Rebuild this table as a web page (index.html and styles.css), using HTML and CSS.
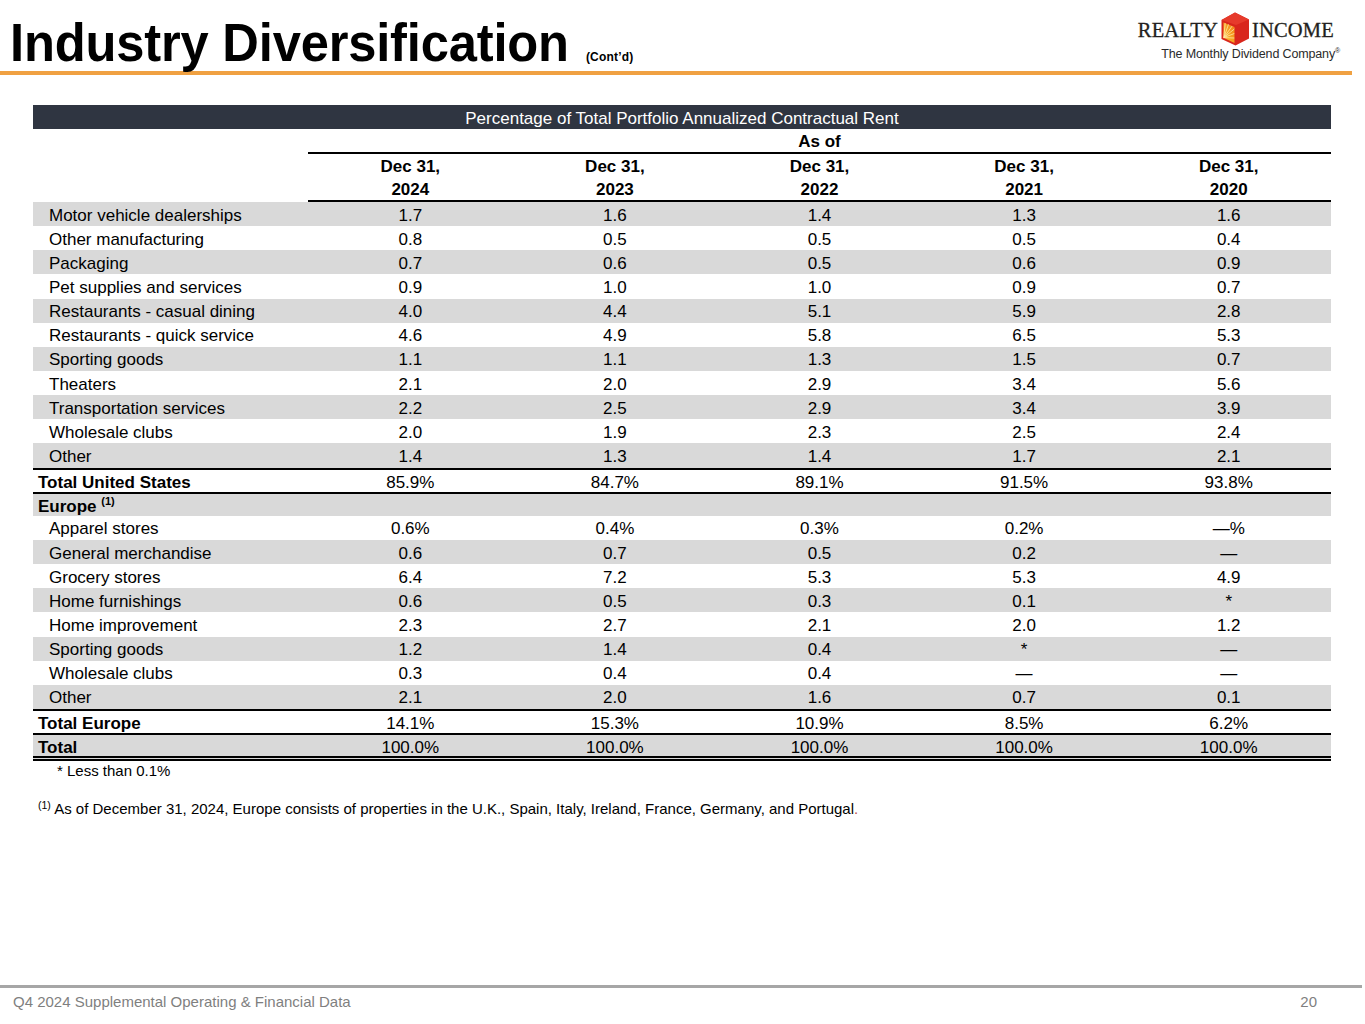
FILE: index.html
```html
<!DOCTYPE html>
<html lang="en">
<head>
<meta charset="utf-8">
<title>Industry Diversification</title>
<link rel="stylesheet" href="styles.css">
</head>
<body>
<div class="page">
  <header class="top">
    <h1 class="title"><span class="title-main">Industry Diversification</span><span class="contd">(Cont’d)</span></h1>
    <div class="logo">
      <div class="logo-row">
        <span class="logo-word">REALTY</span>
        <svg class="house" viewBox="0 0 30 34" width="30" height="34" aria-hidden="true">
          <defs>
            <linearGradient id="sun" x1="0" y1="1" x2="1" y2="0">
              <stop offset="0" stop-color="#fbc02a"/>
              <stop offset="0.6" stop-color="#f59a1f"/>
              <stop offset="1" stop-color="#ef7d1a"/>
            </linearGradient>
          </defs>
          <path d="M15 0.5 L29 7.5 L29 26.5 L15.5 33.5 L1.5 27 L1.5 8 Z" fill="#d9261c"/>
          <path d="M15 0.5 L29 7.5 L16 13 L1.5 8 Z" fill="#e63a2b"/>
          <path d="M3.5 10.5 L14.5 15 L14.5 31 L3.5 25.8 Z" fill="url(#sun)"/>
          <g stroke="#fee9a8" stroke-width="0.8">
            <line x1="3.8" y1="25.6" x2="14.3" y2="17"/>
            <line x1="3.8" y1="25.6" x2="14.3" y2="21.5"/>
            <line x1="3.8" y1="25.6" x2="14.3" y2="26"/>
            <line x1="3.8" y1="25.6" x2="12" y2="14.2"/>
            <line x1="3.8" y1="25.6" x2="8.5" y2="12.4"/>
            <line x1="3.8" y1="25.6" x2="5.2" y2="11.2"/>
          </g>
        </svg>
        <span class="logo-word">INCOME</span>
      </div>
      <div class="tagline">The Monthly Dividend Company<sup>®</sup></div>
    </div>
  </header>

  <main class="content">
    <div class="table">
      <div class="banner">Percentage of Total Portfolio Annualized Contractual Rent</div>
      <div class="row head asof"><div class="lbl"></div><div class="span5">As of</div></div>
      <div class="row head dec"><div class="lbl"></div><div>Dec 31,</div><div>Dec 31,</div><div>Dec 31,</div><div>Dec 31,</div><div>Dec 31,</div></div>
      <div class="row head year"><div class="lbl"></div><div class="c">2024</div><div class="c">2023</div><div class="c">2022</div><div class="c">2021</div><div class="c">2020</div></div>

      <div class="row band"><div class="lbl sub">Motor vehicle dealerships</div><div>1.7</div><div>1.6</div><div>1.4</div><div>1.3</div><div>1.6</div></div>
      <div class="row"><div class="lbl sub">Other manufacturing</div><div>0.8</div><div>0.5</div><div>0.5</div><div>0.5</div><div>0.4</div></div>
      <div class="row band"><div class="lbl sub">Packaging</div><div>0.7</div><div>0.6</div><div>0.5</div><div>0.6</div><div>0.9</div></div>
      <div class="row"><div class="lbl sub">Pet supplies and services</div><div>0.9</div><div>1.0</div><div>1.0</div><div>0.9</div><div>0.7</div></div>
      <div class="row band"><div class="lbl sub">Restaurants - casual dining</div><div>4.0</div><div>4.4</div><div>5.1</div><div>5.9</div><div>2.8</div></div>
      <div class="row"><div class="lbl sub">Restaurants - quick service</div><div>4.6</div><div>4.9</div><div>5.8</div><div>6.5</div><div>5.3</div></div>
      <div class="row band"><div class="lbl sub">Sporting goods</div><div>1.1</div><div>1.1</div><div>1.3</div><div>1.5</div><div>0.7</div></div>
      <div class="row"><div class="lbl sub">Theaters</div><div>2.1</div><div>2.0</div><div>2.9</div><div>3.4</div><div>5.6</div></div>
      <div class="row band"><div class="lbl sub">Transportation services</div><div>2.2</div><div>2.5</div><div>2.9</div><div>3.4</div><div>3.9</div></div>
      <div class="row"><div class="lbl sub">Wholesale clubs</div><div>2.0</div><div>1.9</div><div>2.3</div><div>2.5</div><div>2.4</div></div>
      <div class="row band"><div class="lbl sub">Other</div><div>1.4</div><div>1.3</div><div>1.4</div><div>1.7</div><div>2.1</div></div>
      <div class="row total"><div class="lbl">Total United States</div><div>85.9%</div><div>84.7%</div><div>89.1%</div><div>91.5%</div><div>93.8%</div></div>
      <div class="row band ruled"><div class="lbl group">Europe <sup>(1)</sup></div><div></div><div></div><div></div><div></div><div></div></div>
      <div class="row"><div class="lbl sub">Apparel stores</div><div>0.6%</div><div>0.4%</div><div>0.3%</div><div>0.2%</div><div>—%</div></div>
      <div class="row band"><div class="lbl sub">General merchandise</div><div>0.6</div><div>0.7</div><div>0.5</div><div>0.2</div><div>—</div></div>
      <div class="row"><div class="lbl sub">Grocery stores</div><div>6.4</div><div>7.2</div><div>5.3</div><div>5.3</div><div>4.9</div></div>
      <div class="row band"><div class="lbl sub">Home furnishings</div><div>0.6</div><div>0.5</div><div>0.3</div><div>0.1</div><div>*</div></div>
      <div class="row"><div class="lbl sub">Home improvement</div><div>2.3</div><div>2.7</div><div>2.1</div><div>2.0</div><div>1.2</div></div>
      <div class="row band"><div class="lbl sub">Sporting goods</div><div>1.2</div><div>1.4</div><div>0.4</div><div>*</div><div>—</div></div>
      <div class="row"><div class="lbl sub">Wholesale clubs</div><div>0.3</div><div>0.4</div><div>0.4</div><div>—</div><div>—</div></div>
      <div class="row band"><div class="lbl sub">Other</div><div>2.1</div><div>2.0</div><div>1.6</div><div>0.7</div><div>0.1</div></div>
      <div class="row total"><div class="lbl">Total Europe</div><div>14.1%</div><div>15.3%</div><div>10.9%</div><div>8.5%</div><div>6.2%</div></div>
      <div class="row band total grand"><div class="lbl">Total</div><div>100.0%</div><div>100.0%</div><div>100.0%</div><div>100.0%</div><div>100.0%</div></div>
    </div>
    <p class="note">* Less than 0.1%</p>
    <p class="footnote"><sup>(1)</sup> As of December 31, 2024, Europe consists of properties in the U.K., Spain, Italy, Ireland, France, Germany, and Portugal<span class="red">.</span></p>
  </main>

  <footer class="foot">
    <span>Q4 2024 Supplemental Operating &amp; Financial Data</span>
    <span>20</span>
  </footer>
</div>
</body>
</html>
```

FILE: styles.css
```css
* { box-sizing: border-box; }
html, body { margin: 0; padding: 0; background: #fff; }
body { font-family: "Liberation Sans", Arial, sans-serif; color: #000; }

.page {
  width: 1365px;
  height: 1024px;
  display: flex;
  flex-direction: column;
}

/* ---------- header ---------- */
.top {
  height: 75px;
  margin-right: 13px;
  border-bottom: 4px solid #f0a142;
  display: flex;
  justify-content: space-between;
  align-items: flex-start;
}
.title {
  margin: 0;
  padding: 15.5px 0 0 10px;
  display: flex;
  align-items: baseline;
  font-family: "Liberation Sans", Arial, sans-serif;
  font-weight: 700;
  line-height: 1;
  white-space: nowrap;
}
.title-main {
  font-size: 54.5px;
  display: inline-block;
  transform: scaleX(0.93);
  transform-origin: left center;
  margin-right: -43px;
  letter-spacing: -0.2px;
}
.contd {
  font-size: 12px;
  margin-left: 18px;
  letter-spacing: 0.2px;
}

.logo {
  padding: 12px 18px 0 0;
  display: flex;
  flex-direction: column;
  align-items: flex-end;
}
.logo-row {
  display: flex;
  align-items: center;
  gap: 2px;
}
.logo-word {
  font-family: "Liberation Serif", "Times New Roman", serif;
  font-size: 20.5px;
  letter-spacing: 0.2px;
  color: #231f20;
  -webkit-text-stroke: 0.3px #231f20;
  padding-top: 3px;
}
.house { display: block; }
.tagline {
  margin-top: 1px;
  margin-right: -6px;
  font-family: "Liberation Sans", Arial, sans-serif;
  font-size: 12.5px;
  color: #2a2a2a;
  letter-spacing: -0.15px;
}
.tagline sup { font-size: 7px; }

/* ---------- table ---------- */
.content {
  padding: 30px 0 0 33px;
}
.table {
  width: 1298px;
  font-size: 17px;
}
.banner {
  height: 24px;
  background: #2f3541;
  color: #fff;
  text-align: center;
  line-height: 28px;
}
.row {
  display: grid;
  grid-template-columns: 275px repeat(5, 1fr);
  height: 24.15px;
  padding-top: 3px;
  align-items: center;
}
.row > div { text-align: center; }
.row > .lbl { text-align: left; white-space: nowrap; }
.lbl.sub { padding-left: 16px; }
.lbl.group { padding-left: 5px; font-weight: 700; }
.lbl.group sup { font-size: 11px; vertical-align: 7px; line-height: 0; }

.head { font-weight: 700; }
.asof { height: 25px; align-items: stretch; padding-top: 0; }
.asof .span5 {
  grid-column: 2 / span 5;
  border-bottom: 2px solid #000;
  padding-top: 2px;
  line-height: 21px;
}
.dec { height: 24px; padding-top: 1px; }
.year { height: 24px; align-items: stretch; padding-top: 0; }
.year .c { border-bottom: 2px solid #000; padding-top: 1px; line-height: 21px; }

.band { background: #d9d9d9; }

.total { border-top: 2px solid #000; }
.total .lbl { padding-left: 5px; font-weight: 700; }
.ruled { border-top: 2px solid #000; }
.grand { border-bottom: 5px double #000; height: 28px; }

.note {
  margin: 1px 0 0 24px;
  font-size: 15px;
  line-height: 18px;
}
.footnote {
  margin: 20px 0 0 5px;
  font-size: 15px;
  line-height: 18px;
}
.footnote sup { font-size: 10.5px; vertical-align: 5px; line-height: 0; }
.red { color: #c0504d; }

/* ---------- footer ---------- */
.foot {
  margin-top: auto;
  margin-bottom: 14px;
  margin-right: 3px;
  border-top: 3px solid #a6a6a6;
  padding: 5px 45px 0 13px;
  display: flex;
  justify-content: space-between;
  font-size: 15px;
  color: #7f7f7f;
  line-height: 17px;
}
```
